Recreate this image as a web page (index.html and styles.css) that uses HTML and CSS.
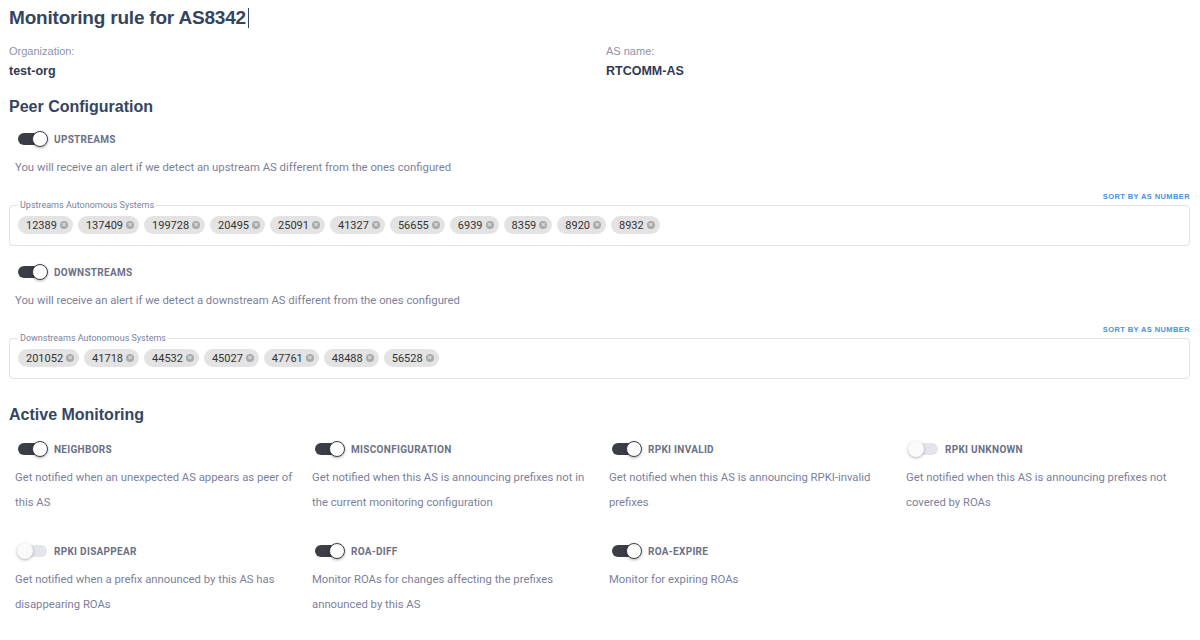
FILE: index.html
```html
<!DOCTYPE html>
<html lang="en">
  <head>
    <meta charset="UTF-8" />
    <title>Monitoring rule for AS8342</title>
    <link rel="stylesheet" href="styles.css">
  </head>
  <body>
    <div class="page">
      <h1 class="title">Monitoring rule for AS8342<span class="caret"></span></h1>

      <div class="info">
        <div class="info-item">
          <div class="info-label">Organization:</div>
          <div class="info-value">test-org</div>
        </div>
        <div class="info-item">
          <div class="info-label">AS name:</div>
          <div class="info-value">RTCOMM-AS</div>
        </div>
      </div>

      <h2 class="section-title">Peer Configuration</h2>

      <div class="peer">
        <label class="switch-row">
          <span class="switch on"><span class="thumb"></span></span>
          <span class="switch-label">Upstreams</span>
        </label>
        <p class="desc">You will receive an alert if we detect an upstream AS different from the ones configured</p>
        <div class="sort"><a href="#">Sort by AS number</a></div>
        <fieldset class="chips-box">
          <legend>Upstreams Autonomous Systems</legend>
          <span class="chip">12389<i class="x">×</i></span>
          <span class="chip">137409<i class="x">×</i></span>
          <span class="chip">199728<i class="x">×</i></span>
          <span class="chip">20495<i class="x">×</i></span>
          <span class="chip">25091<i class="x">×</i></span>
          <span class="chip">41327<i class="x">×</i></span>
          <span class="chip">56655<i class="x">×</i></span>
          <span class="chip">6939<i class="x">×</i></span>
          <span class="chip">8359<i class="x">×</i></span>
          <span class="chip">8920<i class="x">×</i></span>
          <span class="chip">8932<i class="x">×</i></span>
        </fieldset>
      </div>

      <div class="peer">
        <label class="switch-row">
          <span class="switch on"><span class="thumb"></span></span>
          <span class="switch-label">Downstreams</span>
        </label>
        <p class="desc">You will receive an alert if we detect a downstream AS different from the ones configured</p>
        <div class="sort"><a href="#">Sort by AS number</a></div>
        <fieldset class="chips-box">
          <legend>Downstreams Autonomous Systems</legend>
          <span class="chip">201052<i class="x">×</i></span>
          <span class="chip">41718<i class="x">×</i></span>
          <span class="chip">44532<i class="x">×</i></span>
          <span class="chip">45027<i class="x">×</i></span>
          <span class="chip">47761<i class="x">×</i></span>
          <span class="chip">48488<i class="x">×</i></span>
          <span class="chip">56528<i class="x">×</i></span>
        </fieldset>
      </div>

      <h2 class="section-title active-title">Active Monitoring</h2>

      <div class="monitor-grid">
        <div class="monitor">
          <label class="switch-row">
            <span class="switch on"><span class="thumb"></span></span>
            <span class="switch-label">Neighbors</span>
          </label>
          <p class="desc">Get notified when an unexpected AS appears as peer of this AS</p>
        </div>
        <div class="monitor">
          <label class="switch-row">
            <span class="switch on"><span class="thumb"></span></span>
            <span class="switch-label">Misconfiguration</span>
          </label>
          <p class="desc">Get notified when this AS is announcing prefixes not in the current monitoring configuration</p>
        </div>
        <div class="monitor">
          <label class="switch-row">
            <span class="switch on"><span class="thumb"></span></span>
            <span class="switch-label">RPKI invalid</span>
          </label>
          <p class="desc">Get notified when this AS is announcing RPKI-invalid prefixes</p>
        </div>
        <div class="monitor">
          <label class="switch-row">
            <span class="switch"><span class="thumb"></span></span>
            <span class="switch-label">RPKI unknown</span>
          </label>
          <p class="desc">Get notified when this AS is announcing prefixes not covered by ROAs</p>
        </div>
        <div class="monitor">
          <label class="switch-row">
            <span class="switch"><span class="thumb"></span></span>
            <span class="switch-label">RPKI disappear</span>
          </label>
          <p class="desc">Get notified when a prefix announced by this AS has disappearing ROAs</p>
        </div>
        <div class="monitor">
          <label class="switch-row">
            <span class="switch on"><span class="thumb"></span></span>
            <span class="switch-label">ROA-diff</span>
          </label>
          <p class="desc">Monitor ROAs for changes affecting the prefixes announced by this AS</p>
        </div>
        <div class="monitor">
          <label class="switch-row">
            <span class="switch on"><span class="thumb"></span></span>
            <span class="switch-label">ROA-expire</span>
          </label>
          <p class="desc">Monitor for expiring ROAs</p>
        </div>
      </div>
    </div>
  </body>
</html>
```

FILE: styles.css
```css
* {
  margin: 0;
  padding: 0;
  box-sizing: border-box;
}
body {
  background: #ffffff;
  font-family: "Liberation Sans", Arial, sans-serif;
  color: #344563;
}
.page {
  padding: 8px 10px 0 9px;
}
.title {
  font-size: 19px;
  font-weight: bold;
  letter-spacing: -0.2px;
  color: #344563;
  line-height: 20px;
  height: 20px;
}
.caret {
  display: inline-block;
  width: 1px;
  height: 20px;
  background: #344563;
  vertical-align: top;
  margin-left: 2px;
}
.info {
  display: flex;
  margin-top: 16px;
}
.info-item {
  flex: 0 0 597px;
}
.info-label {
  font-size: 11px;
  color: #8e93a8;
  line-height: 14px;
}
.info-value {
  font-size: 12.5px;
  font-weight: bold;
  color: #2e3a55;
  margin-top: 5px;
  line-height: 16px;
}
.section-title {
  font-size: 16px;
  font-weight: bold;
  color: #344563;
  line-height: 20px;
  margin-top: 18px;
}
.active-title {
  margin-top: 26px;
}

/* switches */
.switch-row {
  display: flex;
  align-items: center;
  height: 20px;
  padding-left: 9px;
}
.switch {
  position: relative;
  width: 29px;
  height: 12px;
  border-radius: 6px;
  background: #e4e5ea;
  margin-right: 7px;
}
.switch.on {
  background: #3b3d47;
}
.thumb {
  position: absolute;
  top: -2px;
  left: -1px;
  width: 16px;
  height: 16px;
  border-radius: 50%;
  background: #fafafa;
  box-shadow: 0 1px 3px rgba(0, 0, 0, 0.3);
}
.switch.on .thumb {
  left: 14px;
  background: #ffffff;
  border: 1px solid #3b3d47;
}
.switch-label {
  font-family: Roboto, "Liberation Sans", sans-serif;
  font-size: 10px;
  font-weight: bold;
  text-transform: uppercase;
  letter-spacing: 0.3px;
  color: #6b7086;
}
.desc {
  font-family: Roboto, "Liberation Sans", sans-serif;
  font-size: 11.3px;
  line-height: 25px;
  color: #7b7f9c;
}

/* peer blocks */
.peer {
  margin-top: 12px;
}
.peer + .peer {
  margin-top: 16px;
}
.peer .switch-row {
  margin-bottom: 6px;
}
.peer .desc {
  padding-left: 6px;
}
.sort {
  text-align: right;
  margin-top: 9px;
  line-height: 10px;
}
.sort a {
  font-size: 7.5px;
  font-weight: bold;
  letter-spacing: 0.4px;
  text-transform: uppercase;
  color: #4a8fe0;
  text-decoration: none;
}
.chips-box {
  border: 1px solid #e2e2e2;
  border-radius: 4px;
  padding: 6px 8px 11px 8px;
  margin-top: -2px;
  display: flex;
  flex-wrap: wrap;
  gap: 5px;
}
.chips-box legend {
  font-family: Roboto, "Liberation Sans", sans-serif;
  font-size: 9px;
  color: #7b7f9c;
  padding: 0 2px;
  margin-left: 0;
}
.chip {
  display: inline-flex;
  align-items: center;
  height: 18px;
  padding: 0 5px 0 8px;
  border-radius: 9px;
  background: #e3e3e3;
  font-family: Roboto, "Liberation Sans", sans-serif;
  font-size: 11px;
  color: #333333;
}
.chip .x {
  display: inline-flex;
  align-items: center;
  justify-content: center;
  width: 8px;
  height: 8px;
  border-radius: 50%;
  background: #a9a9a9;
  color: #e3e3e3;
  font-style: normal;
  font-size: 8px;
  font-weight: bold;
  line-height: 8px;
  margin-left: 3px;
}

/* active monitoring grid */
.monitor-grid {
  display: grid;
  grid-template-columns: repeat(4, 297px);
  row-gap: 26px;
  margin-top: 14px;
}
.monitor {
  padding-left: 6px;
  padding-right: 10px;
}
.monitor .switch-row {
  padding-left: 3px;
  margin-bottom: 6px;
}
```
